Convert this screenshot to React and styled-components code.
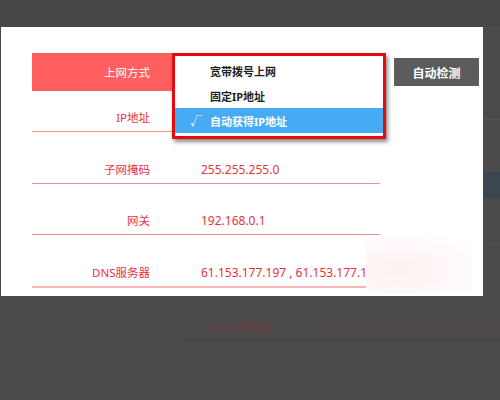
import React from "react";
import styled, { createGlobalStyle } from "styled-components";

const Global = createGlobalStyle`
  html, body { margin: 0; padding: 0; background: #4a4a4a; }
  body { font-family: "Noto Sans", "Noto Sans CJK SC", sans-serif; }
`;

const Page = styled.div`
  width: 500px;
  height: 400px;
  overflow: hidden;
  display: flex;
  flex-direction: column;
  background: #4a4a4a;
`;

const TopBar = styled.div`
  height: 27px;
  flex: none;
  background: #474747;
`;

const Middle = styled.div`
  display: flex;
  height: 269px;
  flex: none;
`;

const Panel = styled.div`
  position: relative;
  width: 482px;
  margin-left: 1px;
  background: #ffffff;
  padding: 26px 0 0 31px;
  box-sizing: border-box;
`;

const RightStrip = styled.div`
  flex: 1;
  display: flex;
  flex-direction: column;
  background: #4a4a4a;
`;

const StripBand = styled.div`
  height: ${(p) => p.$h}px;
  flex: none;
  background: ${(p) => p.$bg || "transparent"};
  border-bottom: ${(p) => (p.$line ? "1px solid #565656" : "none")};
`;

const HeaderRow = styled.div`
  display: flex;
  align-items: flex-start;
  height: 38px;
`;

const HeaderLabel = styled.div`
  width: 140px;
  height: 38px;
  background: #ff5f5f;
  color: #ffffff;
  font-size: 11.5px;
  display: flex;
  align-items: center;
  justify-content: flex-end;
  padding-right: 22px;
  box-sizing: border-box;
`;

const SelectWrap = styled.div`
  position: relative;
  width: 214px;
  height: 38px;
`;

const Dropdown = styled.div`
  position: absolute;
  left: 0;
  top: 0;
  width: 214px;
  box-sizing: border-box;
  border: 3px solid #e30b0b;
  background: #ffffff;
  padding: 2px 0 3px;
  box-shadow: 2px 3px 4px rgba(0, 0, 0, 0.45);
  z-index: 2;
`;

const Option = styled.div`
  display: flex;
  align-items: center;
  height: 25px;
  font-size: 11px;
  font-weight: 700;
  color: ${(p) => (p.$selected ? "#ffffff" : "#1f1f1f")};
  background: ${(p) => (p.$selected ? "#46abf3" : "transparent")};
`;

const Check = styled.span`
  width: 35px;
  padding-left: 15px;
  box-sizing: border-box;
  font-weight: 400;
  font-size: 12px;
`;

const DetectButton = styled.button`
  margin: 5px 0 0 8px;
  width: 85px;
  height: 28px;
  border: none;
  background: #5c5c5c;
  color: #ffffff;
  font-family: "Noto Sans CJK SC", sans-serif;
  font-size: 12px;
  font-weight: 700;
  padding: 0;
`;

const Row = styled.div`
  display: flex;
  align-items: flex-end;
  width: ${(p) => p.$w || 348}px;
  height: ${(p) => p.$h}px;
  padding-bottom: 6px;
  box-sizing: border-box;
  border-bottom: ${(p) => (p.$soft ? "2px solid #f9b4b4" : "1px solid #f58c8c")};
  font-size: 11.5px;
  line-height: 14px;
  color: #e8323d;
  white-space: nowrap;
`;

const Label = styled.div`
  width: 140px;
  flex: none;
  text-align: right;
  padding-right: 22px;
  box-sizing: border-box;
`;

const Value = styled.div`
  padding-left: 29px;
  font-size: 12px;
`;

const Haze = styled.div`
  position: absolute;
  left: 365px;
  top: 210px;
  width: 106px;
  height: 56px;
  z-index: 1;
  background: radial-gradient(ellipse at 30% 60%, #fdf1f1 0%, #fff9f9 55%, #ffffff 100%);
`;

const Backdrop = styled.div`
  flex: 1;
  padding-top: 18px;
`;

const BackRow = styled.div`
  display: flex;
  align-items: center;
  margin-left: 185px;
  height: 26px;
  border-bottom: 1px solid #444444;
  font-size: 12px;
  color: #5e4143;
  white-space: nowrap;
`;

const BackLabel = styled.div`
  width: 111px;
  text-align: right;
  font-weight: 700;
`;

const BackValue = styled.div`
  padding-left: 49px;
`;

export default function App() {
  return (
    <Page>
      <Global />
      <TopBar />
      <Middle>
        <Panel>
          <HeaderRow>
            <HeaderLabel>上网方式</HeaderLabel>
            <SelectWrap>
              <Dropdown>
                <Option><Check />宽带拨号上网</Option>
                <Option><Check />固定IP地址</Option>
                <Option $selected><Check>√</Check>自动获得IP地址</Option>
              </Dropdown>
            </SelectWrap>
            <DetectButton>自动检测</DetectButton>
          </HeaderRow>
          <Row $h={41}>
            <Label>IP地址</Label>
          </Row>
          <Row $h={52}>
            <Label>子网掩码</Label>
            <Value>255.255.255.0</Value>
          </Row>
          <Row $h={51}>
            <Label>网关</Label>
            <Value>192.168.0.1</Value>
          </Row>
          <Row $h={53} $w={334} $soft>
            <Label>DNS服务器</Label>
            <Value>61.153.177.197 , 61.153.177.197</Value>
          </Row>
          <Haze />
        </Panel>
        <RightStrip>
          <StripBand $h={92} $line />
          <StripBand $h={52} />
          <StripBand $h={26} $bg="#3c4651" />
          <StripBand $h={45} $line />
          <StripBand $h={54} />
        </RightStrip>
      </Middle>
      <Backdrop>
        <BackRow>
          <BackLabel>DNS服务器</BackLabel>
          <BackValue>61.153.177.197 , 61.153.177.197</BackValue>
        </BackRow>
      </Backdrop>
    </Page>
  );
}
